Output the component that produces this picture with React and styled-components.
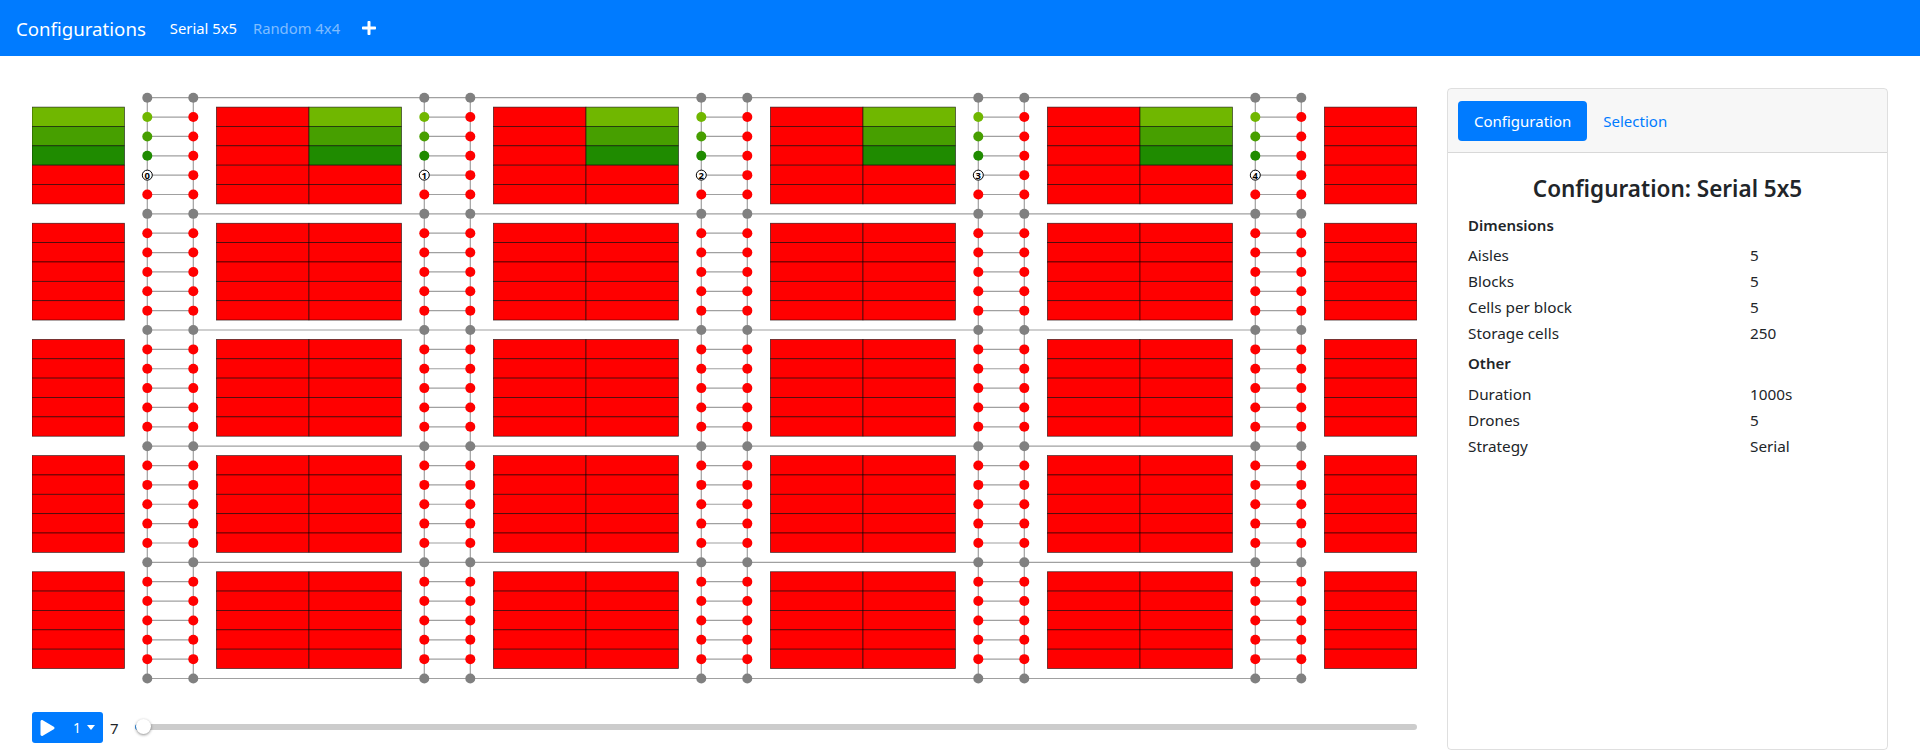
import React from "react";
import styled, { createGlobalStyle } from "styled-components";
import { FaPlay, FaPlus } from "react-icons/fa";

const GlobalStyle = createGlobalStyle`
  html, body {
    margin: 0;
    height: 100%;
    overflow: hidden;
    background: #fff;
    color: #212529;
    font-family: "Noto Sans", "Open Sans", Arial, sans-serif;
    font-size: 15px;
  }
`;

const Navbar = styled.nav`
  height: 56px;
  background: #007bff;
  display: flex;
  align-items: center;
  padding-left: 16px;
`;

const Brand = styled.span`
  color: #fff;
  font-size: 18.65px;
  margin-right: 24px;
`;

const NavLink = styled.span`
  color: ${({ $active }) => ($active ? "#fff" : "rgba(255,255,255,.5)")};
  font-size: 14.8px;
  margin-right: 16px;
  display: flex;
  align-items: center;
`;

const PlusLink = styled(NavLink)`
  margin-left: 5px;
`;

const Page = styled.main`
  display: flex;
  align-items: stretch;
  height: 662px;
  padding: 32px 32px 0;
  gap: 30px;
`;

const Stage = styled.section`
  width: 1385px;
  flex: none;
  display: flex;
  flex-direction: column;
`;

const Diagram = styled.svg`
  display: block;
  width: 1385px;
  height: 600px;
  margin-bottom: 24px;
`;

const Controls = styled.div`
  display: flex;
  align-items: center;
  height: 31px;
`;

const PlayButton = styled.button`
  width: 71px;
  height: 31px;
  border: 0;
  border-radius: 3px;
  background: #007bff;
  color: #fff;
  font: inherit;
  font-size: 14px;
  padding: 0 8px;
  display: flex;
  align-items: center;
`;

const SpeedLabel = styled.span`
  margin-left: 18px;
`;

const Caret = styled.span`
  margin-left: 6px;
  border-top: 5px solid #fff;
  border-left: 4.5px solid transparent;
  border-right: 4.5px solid transparent;
`;

const Tick = styled.span`
  margin-left: 7px;
  width: 25px;
  font-size: 15px;
`;

const Track = styled.div`
  position: relative;
  flex: 1;
  height: 6px;
  margin-top: -2px;
  border-radius: 3px;
  background: #ccc;
`;

const TrackFill = styled.div`
  position: absolute;
  left: 0;
  top: 0;
  width: 8px;
  height: 6px;
  border-radius: 3px;
  background: #2f8fe8;
`;

const Handle = styled.div`
  position: absolute;
  left: 1px;
  top: -5px;
  width: 15px;
  height: 15px;
  border-radius: 50%;
  background: #fff;
  box-shadow: 0 1px 3px rgba(0, 0, 0, 0.45);
`;

const Card = styled.aside`
  flex: 1;
  border: 1px solid rgba(0, 0, 0, 0.125);
  border-radius: 4px;
  overflow: hidden;
`;

const CardHeader = styled.header`
  height: 64px;
  box-sizing: border-box;
  padding: 12px 10px;
  display: flex;
  background: rgba(0, 0, 0, 0.03);
  border-bottom: 1px solid rgba(0, 0, 0, 0.125);
`;

const Tab = styled.span`
  height: 40px;
  padding: 0 16px;
  display: flex;
  align-items: center;
  border-radius: 4px;
  font-size: 15px;
  color: ${({ $active }) => ($active ? "#fff" : "#007bff")};
  background: ${({ $active }) => ($active ? "#007bff" : "transparent")};
`;

const CardBody = styled.div`
  padding: 21px 20px;
`;

const Title = styled.h2`
  margin: 0 0 9px;
  text-align: center;
  font-size: 22.5px;
  line-height: 30px;
  font-weight: 600;
`;

const SectionTitle = styled.h3`
  margin: ${({ $spaced }) => ($spaced ? "5px 0 6px" : "0 0 5px")};
  font-size: 15px;
  line-height: 24px;
  font-weight: 600;
`;

const Row = styled.div`
  display: flex;
  height: 26px;
  line-height: 26px;
  font-size: 15.3px;
`;

const RowLabel = styled.span`
  width: 282px;
`;

const COL_PITCH = 277;
const ROW_PITCH = 19.36;
const BLOCK_PITCH = 116.16;
const Y0 = 9.7;

const GREENS = ["#70b700", "#479f00", "#1f8b00"];
const aisles = [0, 1, 2, 3, 4];
const blocks = [0, 1, 2, 3, 4];
const rows = [1, 2, 3, 4, 5];

function Cell({ x, block, row, color }) {
  return (
    <rect
      x={x}
      y={19.1 + block * BLOCK_PITCH + row * ROW_PITCH}
      width={92.5}
      height={ROW_PITCH}
      fill={color}
      stroke="#000"
      strokeOpacity="0.7"
      strokeWidth="0.75"
    />
  );
}

function Warehouse() {
  const lastY = Y0 + 5 * BLOCK_PITCH;

  return (
    <Diagram viewBox="0 0 1385 600">
      {blocks.map((b) =>
        [0, 1, 2, 3, 4].map((r) =>
          aisles.map((a) => (
            <React.Fragment key={`${b}-${r}-${a}`}>
              <Cell
                x={COL_PITCH * a}
                block={b}
                row={r}
                color={b === 0 && r < 3 ? GREENS[r] : "#ff0000"}
              />
              <Cell x={184.4 + COL_PITCH * a} block={b} row={r} color="#ff0000" />
            </React.Fragment>
          ))
        )
      )}

      {/* cross aisles */}
      {[0, 1, 2, 3, 4, 5].map((b) => (
        <line
          key={b}
          x1={115.3}
          x2={1269.3}
          y1={Y0 + b * BLOCK_PITCH}
          y2={Y0 + b * BLOCK_PITCH}
          stroke="#a0a0a0"
          strokeWidth="1.2"
        />
      ))}

      {aisles.map((a) => {
        const left = 115.3 + COL_PITCH * a;
        const right = 161.3 + COL_PITCH * a;
        return (
          <g key={a}>
            <line x1={left} x2={left} y1={Y0} y2={lastY} stroke="#a0a0a0" strokeWidth="1.2" />
            <line x1={right} x2={right} y1={Y0} y2={lastY} stroke="#a0a0a0" strokeWidth="1.2" />
            {[0, 1, 2, 3, 4, 5].map((b) => (
              <g key={b}>
                <circle cx={left} cy={Y0 + b * BLOCK_PITCH} r="5" fill="#808080" />
                <circle cx={right} cy={Y0 + b * BLOCK_PITCH} r="5" fill="#808080" />
              </g>
            ))}
            {blocks.map((b) =>
              rows.map((r) => {
                const y = Y0 + b * BLOCK_PITCH + r * ROW_PITCH;
                const isDrone = b === 0 && r === 4;
                return (
                  <g key={`${b}-${r}`}>
                    <line x1={left} x2={right} y1={y} y2={y} stroke="#a0a0a0" strokeWidth="1.2" />
                    <circle cx={right} cy={y} r="5" fill="#ff0000" />
                    {isDrone ? (
                      <>
                        <circle cx={left} cy={y} r="5" fill="#fff" stroke="#000" strokeWidth="1" />
                        <text
                          x={left}
                          y={y + 3.4}
                          textAnchor="middle"
                          fontSize="9.5"
                          fontWeight="700"
                          fontFamily="'Noto Sans', sans-serif"
                          fill="#000"
                        >
                          {a}
                        </text>
                      </>
                    ) : (
                      <circle
                        cx={left}
                        cy={y}
                        r="5"
                        fill={b === 0 && r < 4 ? GREENS[r - 1] : "#ff0000"}
                      />
                    )}
                  </g>
                );
              })
            )}
          </g>
        );
      })}
    </Diagram>
  );
}

const dimensions = [
  ["Aisles", "5"],
  ["Blocks", "5"],
  ["Cells per block", "5"],
  ["Storage cells", "250"],
];

const other = [
  ["Duration", "1000s"],
  ["Drones", "5"],
  ["Strategy", "Serial"],
];

export default function App() {
  return (
    <>
      <GlobalStyle />
      <Navbar>
        <Brand>Configurations</Brand>
        <NavLink $active>Serial 5x5</NavLink>
        <NavLink>Random 4x4</NavLink>
        <PlusLink $active>
          <FaPlus size={16} />
        </PlusLink>
      </Navbar>
      <Page>
        <Stage>
          <Warehouse />
          <Controls>
            <PlayButton>
              <FaPlay size={16} />
              <SpeedLabel>1</SpeedLabel>
              <Caret />
            </PlayButton>
            <Tick>7</Tick>
            <Track>
              <TrackFill />
              <Handle />
            </Track>
          </Controls>
        </Stage>
        <Card>
          <CardHeader>
            <Tab $active>Configuration</Tab>
            <Tab>Selection</Tab>
          </CardHeader>
          <CardBody>
            <Title>Configuration: Serial 5x5</Title>
            <SectionTitle>Dimensions</SectionTitle>
            {dimensions.map(([label, value]) => (
              <Row key={label}>
                <RowLabel>{label}</RowLabel>
                <span>{value}</span>
              </Row>
            ))}
            <SectionTitle $spaced>Other</SectionTitle>
            {other.map(([label, value]) => (
              <Row key={label}>
                <RowLabel>{label}</RowLabel>
                <span>{value}</span>
              </Row>
            ))}
          </CardBody>
        </Card>
      </Page>
    </>
  );
}
